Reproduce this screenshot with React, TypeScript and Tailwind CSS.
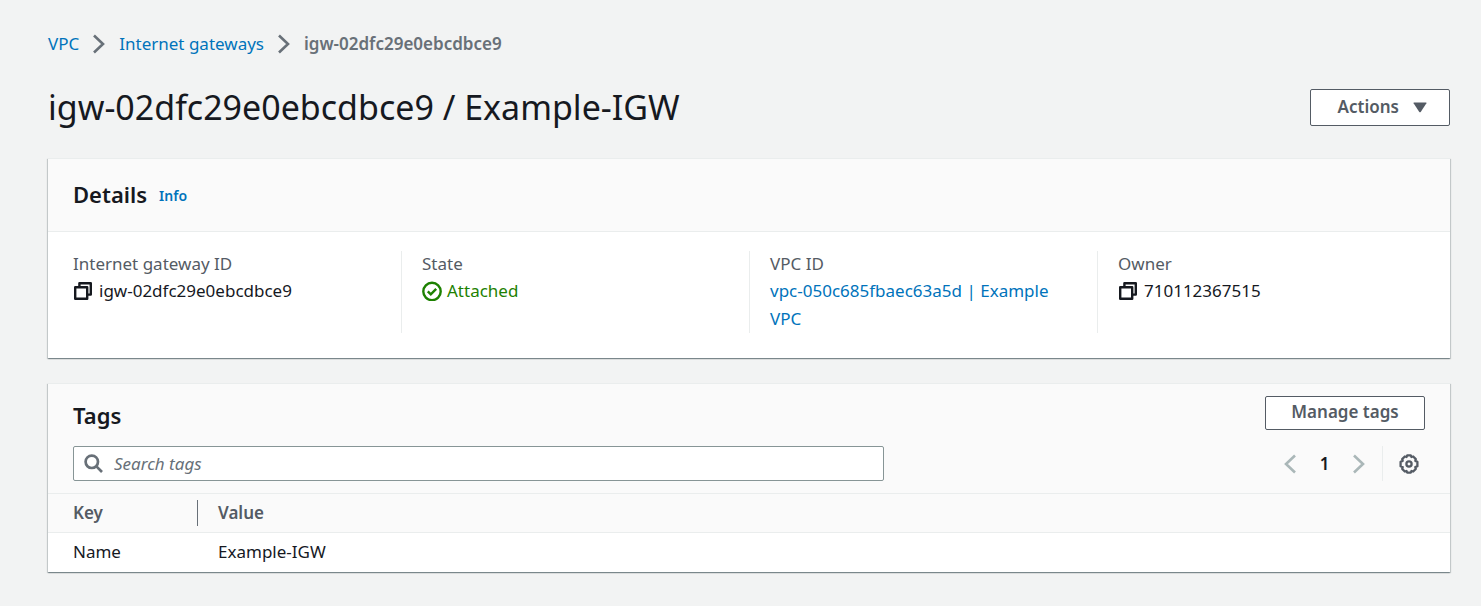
import React from "react";

const details = "text-[17px] leading-7";
const card =
  "border-t border-[#eaeded] bg-white shadow-[0_1px_1px_0_rgba(0,28,36,0.3),1px_1px_1px_0_rgba(0,28,36,0.15),-1px_1px_1px_0_rgba(0,28,36,0.15)]";

function Chevron({ flip = false, className = "" }: { flip?: boolean; className?: string }) {
  return (
    <svg width="14" height="20" viewBox="0 0 14 20" fill="none" stroke="currentColor" strokeWidth="2.6" className={className} aria-hidden="true">
      <path d={flip ? "M12 1.5 3 10l9 8.5" : "M2 1.5 11 10l-9 8.5"} />
    </svg>
  );
}

function CopyIcon() {
  return (
    <svg width="20" height="20" viewBox="0 0 20 20" fill="none" stroke="currentColor" strokeWidth="2.4" strokeLinejoin="round" aria-hidden="true">
      <path d="M2.2 6.2h12v11.6h-12z" />
      <path d="M6.4 6V2.2h11.4v11.4h-3.4" />
    </svg>
  );
}

function CheckIcon() {
  return (
    <svg width="20" height="20" viewBox="0 0 20 20" fill="none" stroke="currentColor" strokeWidth="2.4" aria-hidden="true">
      <circle cx="10" cy="10.5" r="8.7" />
      <path d="m5.8 10.3 3 3 5.4-5.4" />
    </svg>
  );
}

function SearchIcon() {
  return (
    <svg width="20" height="20" viewBox="0 0 20 20" fill="none" stroke="currentColor" strokeWidth="2.7" aria-hidden="true">
      <circle cx="7.8" cy="7.8" r="6.2" />
      <path d="m12.4 12.4 5.6 5.6" />
    </svg>
  );
}

function GearIcon() {
  return (
    <svg width="20" height="20" viewBox="0 0 20 20" fill="none" stroke="currentColor" strokeWidth="2.3" strokeLinejoin="round" aria-hidden="true">
      <path d="M8.2 1.4h3.6l.7 1.6 1.7-.5 2.6 2.6-.5 1.8 2.1.9v4.4l-2.1.9.5 1.8-2.6 2.6-1.7-.5-.7 1.6H8.2L7.500 17l-1.700.5-2.600-2.600.5-1.800-2.100-.9V7.800l2.100-.9-.5-1.800 2.600-2.600 1.700.5z" />
      <circle cx="10" cy="10" r="2.6" />
    </svg>
  );
}

function Field({ label, first = false, children }: { label: string; first?: boolean; children: React.ReactNode }) {
  return (
    <div className={first ? "px-5" : "border-l border-[#eaeded] px-5"}>
      <dt className="text-[17px] leading-[26px] text-[#545b64]">{label}</dt>
      <dd className={details}>{children}</dd>
    </div>
  );
}

export default function App() {
  return (
    <main className="min-h-screen bg-[#f2f3f3] pl-12 pr-[31px] pt-[30px] pb-8 font-['Noto_Sans','Open_Sans',sans-serif] text-[#16191f]">
      <nav aria-label="Breadcrumb" className="flex items-center gap-[13px] text-[17px] leading-7">
        <a href="#vpc" className="text-[#0073bb]">VPC</a>
        <Chevron className="text-[#687078]" />
        <a href="#gateways" className="text-[#0073bb]">Internet gateways</a>
        <Chevron className="text-[#687078]" />
        <span className="font-semibold text-[#687078]">igw-02dfc29e0ebcdbce9</span>
      </nav>

      <header className="mt-6 flex items-center justify-between">
        <h1 className="text-[34px] leading-[50px]">igw-02dfc29e0ebcdbce9 / Example-IGW</h1>
        <button type="button" className="flex h-[37px] w-[140px] items-center justify-end gap-[14px] rounded-xs border border-[#545b64] bg-white pr-[22px] text-[17px] font-semibold text-[#545b64]">
          Actions
          <svg width="14" height="11" viewBox="0 0 14 11" fill="currentColor" aria-hidden="true">
            <path d="M1 .5h12q.8 0 .4.7L7.7 9.900q-.7.9-1.400 0L.6 1.200Q.2.5 1 .5z" />
          </svg>
        </button>
      </header>

      <section className={`mt-[26px] ${card}`}>
        <div className="flex h-[73px] items-center gap-3 border-b border-[#eaeded] bg-[#fafafa] px-[25px] pb-[3px]">
          <h2 className="text-[22px] font-semibold leading-7">Details</h2>
          <a href="#info" className="pt-1 text-[14px] font-semibold text-[#0073bb]">Info</a>
        </div>
        <dl className="grid grid-cols-4 px-[5px] pt-[19px] pb-[25px]">
          <Field label="Internet gateway ID" first>
            <span className="flex items-center gap-[6px]">
              <button type="button" aria-label="Copy internet gateway ID"><CopyIcon /></button>
              igw-02dfc29e0ebcdbce9
            </span>
          </Field>
          <Field label="State">
            <span className="flex items-center gap-[5px] text-[#1d8102]">
              <CheckIcon />
              Attached
            </span>
          </Field>
          <Field label="VPC ID">
            <a href="#vpc-detail" className="text-[#0073bb]">vpc-050c685fbaec63a5d | Example VPC</a>
          </Field>
          <Field label="Owner">
            <span className="flex items-center gap-[6px]">
              <button type="button" aria-label="Copy owner"><CopyIcon /></button>
              710112367515
            </span>
          </Field>
        </dl>
      </section>

      <section className={`mt-[25px] ${card}`}>
        <div className="border-b border-[#eaeded] bg-[#fafafa] px-[25px] py-3">
          <div className="flex items-center justify-between">
            <h2 className="pt-1 text-[22px] font-semibold leading-7">Tags</h2>
            <button type="button" className="flex h-[34px] w-40 justify-center rounded-xs border border-[#545b64] bg-white text-[17px] font-semibold leading-[30px] text-[#545b64]">
              Manage tags
            </button>
          </div>
          <div className="mt-4 flex items-center justify-between">
            <label className="flex h-[35px] w-3/5 items-center gap-[10px] rounded-xs border border-[#879596] bg-white px-[10px] text-[#687078]">
              <SearchIcon />
              <input
                type="search"
                aria-label="Search tags"
                placeholder="Search tags"
                className="min-w-0 flex-1 bg-transparent text-[17px] outline-none placeholder:italic placeholder:text-[#687078]"
              />
            </label>
            <div className="flex items-center text-[#aab7b8]">
              <button type="button" aria-label="Previous page"><Chevron flip /></button>
              <span className="w-[55px] text-center text-[17px] font-semibold text-[#16191f]">1</span>
              <button type="button" aria-label="Next page"><Chevron /></button>
              <span className="ml-4 flex h-[35px] items-center border-l border-[#eaeded] pl-4 pr-[6px] text-[#545b64]">
                <button type="button" aria-label="Preferences"><GearIcon /></button>
              </span>
            </div>
          </div>
        </div>
        <table className="w-full text-left text-[17px] leading-[26px]">
          <thead>
            <tr className="border-b border-[#eaeded] bg-[#fafafa] text-[#545b64]">
              <th scope="col" className="w-[150px] py-[6px] pl-[25px] font-semibold">
                <div className="border-r border-[#687078]">Key</div>
              </th>
              <th scope="col" className="py-[6px] pl-5 font-semibold">Value</th>
            </tr>
          </thead>
          <tbody>
            <tr>
              <td className="pt-[6px] pb-[7px] pl-[25px]">Name</td>
              <td className="pt-[6px] pb-[7px] pl-5">Example-IGW</td>
            </tr>
          </tbody>
        </table>
      </section>
    </main>
  );
}
